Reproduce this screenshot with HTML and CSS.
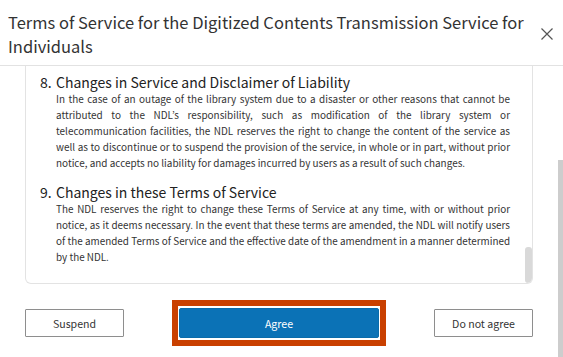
FILE: index.html
```html
<!DOCTYPE html>
<html lang="en">
<head>
<meta charset="utf-8">
<title>Terms of Service</title>
<link rel="stylesheet" href="styles.css">
</head>
<body>
<div class="modal">
  <header class="modal-header">
    <h1 class="modal-title">Terms of Service for the Digitized Contents Transmission Service for Individuals</h1>
    <button class="close" aria-label="Close">
      <svg width="12" height="12" viewBox="0 0 12 12"><path d="M0.5 0.5 L11.5 11.5 M11.5 0.5 L0.5 11.5" stroke="#555" stroke-width="1.2" fill="none"/></svg>
    </button>
  </header>
  <div class="modal-body">
    <div class="terms">
      <section class="clause">
        <h2 class="clause-title"><span class="num">8.</span>Changes in Service and Disclaimer of Liability</h2>
        <p class="clause-text">In the case of an outage of the library system due to a disaster or other reasons that cannot be attributed to the NDL’s responsibility, such as modification of the library system or telecommunication facilities, the NDL reserves the right to change the content of the service as well as to discontinue or to suspend the provision of the service, in whole or in part, without prior notice, and accepts no liability for damages incurred by users as a result of such changes.</p>
      </section>
      <section class="clause">
        <h2 class="clause-title"><span class="num">9.</span>Changes in these Terms of Service</h2>
        <p class="clause-text clause-text-tight">The NDL reserves the right to change these Terms of Service at any time, with or without prior notice, as it deems necessary. In the event that these terms are amended, the NDL will notify users of the amended Terms of Service and the effective date of the amendment in a manner determined by the NDL.</p>
      </section>
      <div class="terms-thumb"></div>
    </div>
    <div class="actions">
      <button class="btn">Suspend</button>
      <div class="highlight"><button class="btn btn-primary">Agree</button></div>
      <button class="btn">Do not agree</button>
    </div>
  </div>
  <div class="page-thumb"></div>
</div>
</body>
</html>
```
FILE: styles.css
```css
* { box-sizing: border-box; }
html, body {
  margin: 0;
  padding: 0;
  background: #fff;
}
body {
  font-family: "Noto Sans CJK JP", "Noto Sans", sans-serif;
  color: #333;
  overflow: hidden;
}
.modal {
  position: relative;
  width: 563px;
  height: 357px;
  overflow: hidden;
}
.modal-header {
  display: flex;
  align-items: center;
  height: 66px;
  padding: 10px 6px 7px 8px;
  border-bottom: 1px solid #e2e2e2;
}
.modal-title {
  flex: 1;
  margin: 0;
  font-size: 16.5px;
  line-height: 24px;
  font-weight: 400;
  color: #333;
}
.close {
  width: 20px;
  height: 20px;
  padding: 4px;
  margin-left: 2px;
  border: 0;
  background: none;
  display: flex;
  align-items: center;
  justify-content: center;
}
.modal-body {
  padding: 0 30px 0 25px;
}
.terms {
  position: relative;
  height: 218px;
  border: 1px solid #e3e3e3;
  border-top: 0;
  border-radius: 0 0 6px 6px;
  padding: 7px 22px 0 14px;
  overflow: hidden;
}
.clause + .clause {
  margin-top: 12px;
}
.clause-title {
  margin: 0;
  font-size: 14px;
  line-height: 18px;
  font-weight: 400;
  color: #222;
}
.num {
  display: inline-block;
  width: 16px;
}
.clause-text {
  margin: 0 0 0 16px;
  font-size: 9.95px;
  line-height: 16px;
  text-align: justify;
  color: #333;
}
.clause-text-tight {
  font-size: 9.9px;
}
.terms-thumb {
  position: absolute;
  right: 0;
  bottom: 0;
  width: 7px;
  height: 36px;
  border-radius: 3px;
  background: #d9d9d9;
}
.actions {
  margin-top: 16px;
  display: flex;
  justify-content: space-between;
  align-items: center;
  height: 46px;
}
.btn {
  width: 99px;
  height: 28px;
  border: 1px solid #8e8e8e;
  border-radius: 1px;
  background: #fff;
  font-family: inherit;
  font-size: 10.6px;
  color: #333;
  padding: 0;
}
.highlight {
  border: 6px solid #c94000;
  padding: 2px 1px;
  background: #fff;
}
.btn-primary {
  display: block;
  width: 200px;
  height: 30px;
  border: 1px solid #0a6cab;
  border-radius: 2px;
  background: #0b72b6;
  color: #fff;
}
.page-thumb {
  position: absolute;
  right: 0;
  top: 160px;
  bottom: 0;
  width: 5px;
  background: #cdcdcd;
}
```
